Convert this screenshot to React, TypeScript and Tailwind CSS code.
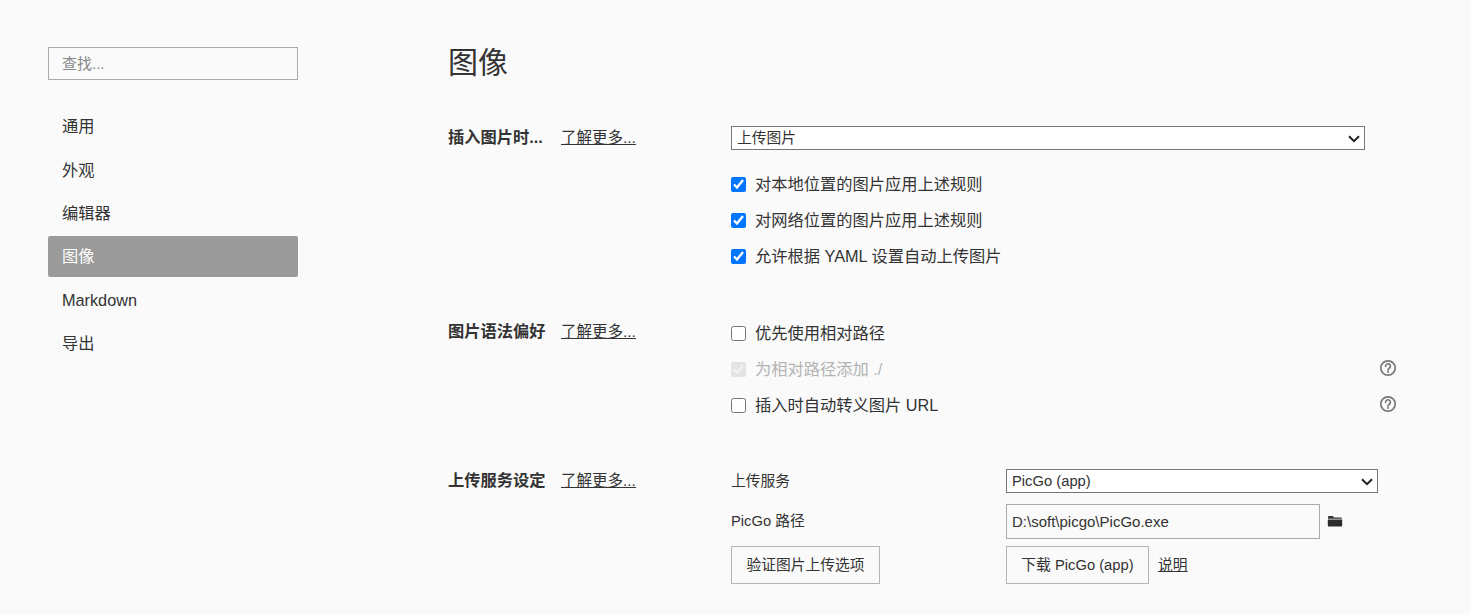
const font = '[font-family:"Liberation_Sans","Noto_Sans_CJK_SC",sans-serif]'

const navItems = ['通用', '外观', '编辑器', '图像', 'Markdown', '导出']

function HelpIcon() {
  return (
    <svg width="18" height="18" viewBox="0 0 18 18" fill="none" className="block shrink-0">
      <circle cx="9" cy="9" r="7.2" stroke="#777" strokeWidth="1.7" />
      <path d="M6.6 7.2a2.4 2.4 0 1 1 3.7 2c-.8.5-1.3 1-1.3 1.9" stroke="#777" strokeWidth="1.7" strokeLinecap="round" />
      <circle cx="9" cy="13" r="1" fill="#777" />
    </svg>
  )
}

function FolderIcon() {
  return (
    <svg width="16" height="12" viewBox="0 0 16 12" className="mb-[2px] ml-[7px] shrink-0">
      <path d="M1 2.5C1 1.4 1.5 1 2.5 1h3.2l1.4 1.4h6.2c1 0 1.7.5 1.7 1.4H1z" fill="#333" />
      <path d="M.8 4.6h14.4V10.3c0 .8-.5 1.2-1.3 1.2H2.1c-.8 0-1.3-.4-1.3-1.2z" fill="#2b2b2b" />
    </svg>
  )
}

function Select({ value, width }: { value: string; width: string }) {
  return (
    <div className={`relative h-6 ${width}`}>
      <select className="block h-6 w-full appearance-none rounded-none border border-[#767676] bg-white pb-[2px] pl-[5px] text-[14.75px] text-[#333] outline-none">
        <option>{value}</option>
      </select>
      <svg width="12" height="8" viewBox="0 0 12 8" fill="none" className="pointer-events-none absolute top-[9px] right-[5px]">
        <path d="M1 1.2l5 5 5-5" stroke="#222" strokeWidth="2" />
      </svg>
    </div>
  )
}

function CheckRow({
  label,
  checked,
  disabled,
  help,
}: {
  label: string
  checked?: boolean
  disabled?: boolean
  help?: boolean
}) {
  return (
    <div className="flex h-9 w-[666px] items-center">
      <input
        type="checkbox"
        defaultChecked={checked}
        disabled={disabled}
        className={`m-0 h-[15px] w-[15px] shrink-0 ${disabled ? 'opacity-50' : ''}`}
      />
      <span className={`ml-[9px] ${disabled ? 'text-[#b3b3b3]' : 'text-[#333]'}`}>{label}</span>
      {help && (
        <span className="mb-[3px] ml-auto">
          <HelpIcon />
        </span>
      )}
    </div>
  )
}

function SectionTitle({ title, className }: { title: string; className: string }) {
  return (
    <div className={`flex w-[283px] shrink-0 items-baseline self-start ${className}`}>
      <span className="w-[113px] shrink-0 font-bold text-[#333]">{title}</span>
      <a className="text-[15.5px] text-[#333] underline">了解更多...</a>
    </div>
  )
}

export default function App() {
  return (
    <div className={`${font} flex h-[615px] w-[1471px] overflow-hidden bg-[#fafafa] text-[16.25px] text-[#333]`}>
      {/* Sidebar */}
      <aside className="w-[448px] shrink-0 pl-12 pt-[47px]">
        <input
          placeholder="查找..."
          className="h-[33px] w-[250px] border border-[#aaa] bg-transparent px-[13px] text-[15px] outline-none placeholder:text-[#888]"
        />
        <nav className="mt-[26px] flex w-[250px] flex-col gap-[2.3px]">
          {navItems.map((item) => (
            <div
              key={item}
              className={`flex h-[41px] items-center rounded-[2px] px-[14px] ${
                item === '图像' ? 'bg-[#9b9b9b] text-white' : 'text-[#333]'
              }`}
            >
              {item}
            </div>
          ))}
        </nav>
      </aside>

      {/* Main */}
      <main className="flex-1">
        <h1 className="mt-[41px] h-[44px] text-[30px] leading-[44px] font-normal text-[#333]">图像</h1>

        <section className="mt-[41px] flex">
          <SectionTitle title="插入图片时..." className="-mt-px" />
          <div>
            <Select value="上传图片" width="w-[634px]" />
            <div className="mt-4">
              <CheckRow label="对本地位置的图片应用上述规则" checked />
              <CheckRow label="对网络位置的图片应用上述规则" checked />
              <CheckRow label="允许根据 YAML 设置自动上传图片" checked />
            </div>
          </div>
        </section>

        <section className="mt-[41px] flex">
          <SectionTitle title="图片语法偏好" className="mt-[4px]" />
          <div>
            <CheckRow label="优先使用相对路径" />
            <CheckRow label="为相对路径添加 ./" checked disabled help />
            <CheckRow label="插入时自动转义图片 URL" help />
          </div>
        </section>

        <section className="mt-[46px] flex">
          <SectionTitle title="上传服务设定" className="-mt-px" />
          <div className="text-[14.75px]">
            <div className="flex h-6 items-center">
              <span className="w-[275px]">上传服务</span>
              <Select value="PicGo (app)" width="w-[372px]" />
            </div>
            <div className="mt-[11px] flex h-[35px] items-center">
              <span className="w-[275px]">PicGo 路径</span>
              <input
                defaultValue="D:\soft\picgo\PicGo.exe"
                className="h-[35px] w-[314px] border border-[#aaa] bg-transparent px-[5px] text-[15px] outline-none"
              />
              <FolderIcon />
            </div>
            <div className="mt-[7px] flex items-center">
              <button className="h-[38px] w-[149px] border border-[#b5b5b5]">验证图片上传选项</button>
              <button className="ml-[126px] h-[38px] w-[143px] border border-[#b5b5b5]">下载 PicGo (app)</button>
              <a className="ml-[9px] underline">说明</a>
            </div>
          </div>
        </section>
      </main>
    </div>
  )
}
